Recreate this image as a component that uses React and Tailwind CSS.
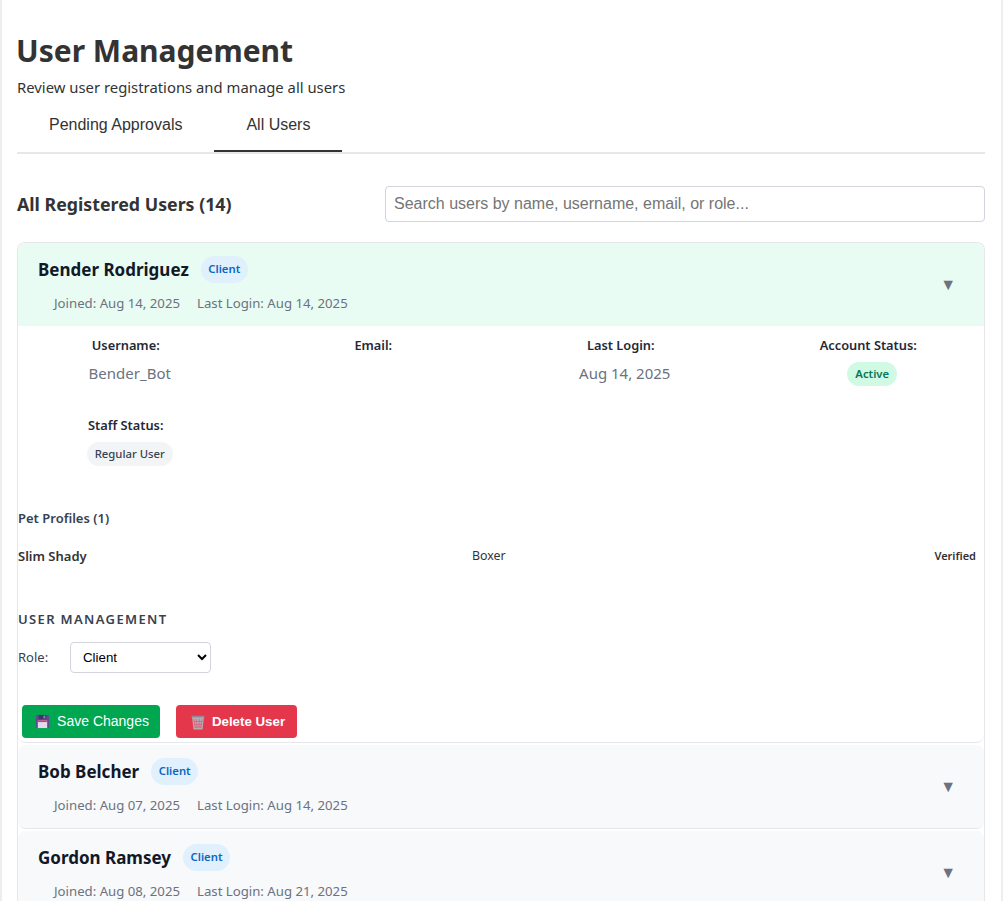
import React from "react";

const SANS = "font-['Noto_Sans','Open_Sans',sans-serif]";
const ARIAL = "font-['Liberation_Sans',Arial,sans-serif]";

const FloppyIcon = () => (
    <svg width="15" height="15" viewBox="0 0 16 16" className="shrink-0">
        <path d="M1 2.5 Q1 1 2.5 1 H14 L15 2 V13.5 Q15 15 13.5 15 H2.5 Q1 15 1 13.5 Z" fill="#5c4b8f" />
        <rect x="4" y="1" width="8" height="4.5" fill="#3f3468" />
        <rect x="9" y="1.8" width="2" height="3" fill="#8d7fbd" />
        <rect x="3" y="7" width="10" height="8" fill="#e3d8ee" />
        <rect x="3" y="7" width="10" height="1.6" fill="#e0365d" />
    </svg>
);

const TrashIcon = () => (
    <svg width="14" height="15" viewBox="0 0 14 15" className="shrink-0">
        <path d="M1 1.5 H13 L11.6 14 Q11.5 14.6 11 14.6 H3 Q2.5 14.6 2.4 14 Z" fill="#b8a9b4" />
        <rect x="0.5" y="0.8" width="13" height="1.6" fill="#8f8a96" />
        <path d="M3 4 L4.4 13 M5.5 4 L6 13 M8.5 4 L8 13 M11 4 L9.6 13 M2.6 6.5 H11.4 M3 9.5 H11 M3.4 12 H10.6" stroke="#d8657c" strokeWidth="0.8" fill="none" />
    </svg>
);

const Caret = () => <span className={`${SANS} mb-[2px] mr-[1px] text-[16px] leading-none text-[#6b7280]`}>▼</span>;

const RoleBadge = () => (
    <span className={`${SANS} ml-3 inline-flex h-[27px] w-[47px] items-center justify-center rounded-full bg-[#e1f0fd] text-[11.3px] font-semibold text-[#0b66c3]`}>
        Client
    </span>
);

const UserHeader = ({ name, joined, login, bg }) => (
    <div className={`flex items-center justify-between pl-[20px] pr-[27px] ${bg}`}>
        <div>
            <div className="flex items-center pt-[13px]">
                <span className="text-[17px] font-bold text-[#111827]">{name}</span>
                <RoleBadge />
            </div>
            <div className="mt-[11px] flex gap-[17px] pb-[14px] pl-4 text-[13.2px] leading-[18px] text-[#6b7280]">
                <span>Joined: {joined}</span>
                <span>Last Login: {login}</span>
            </div>
        </div>
        <Caret />
    </div>
);

const Detail = ({ label, children }) => (
    <div className="flex flex-col items-center">
        <span className="text-[12.8px] font-semibold leading-[18px] text-[#1f2937]">{label}</span>
        {children}
    </div>
);

const Value = ({ children }) => <span className="ml-2 mt-[9px] h-[22px] text-[15px] leading-[21px] text-[#6b7280]">{children}</span>;

const App = () => {
    return (
        <div className={`${SANS} h-[901px] overflow-hidden border-x-2 border-[#eeeeee] bg-white`}>
            <div className="pl-[15px] pr-[16px] pt-[32px]">
                <h1 className="-ml-[1px] text-[30px] font-bold leading-[38px] text-[#333333]">User Management</h1>
                <p className="mt-[7px] text-[14.85px] leading-[20px] text-[#333333]">Review user registrations and manage all users</p>

                <div className={`${ARIAL} mt-[2px] flex border-b-2 border-[#e5e7eb] text-[16px] text-[#333333]`}>
                    <button className="h-[53px] px-8 pb-[2px]">Pending Approvals</button>
                    <button className="h-[53px] border-b-2 border-[#333333] px-8">All Users</button>
                </div>

                <div className="mt-[32px] flex items-center justify-between">
                    <h2 className="text-[17.8px] font-bold text-[#333333]">All Registered Users (14)</h2>
                    <input
                        readOnly
                        placeholder="Search users by name, username, email, or role..."
                        className={`${ARIAL} h-[36px] w-[600px] rounded border border-[#d1d5db] px-2 text-[16px] placeholder:text-[#757575]`}
                    />
                </div>

                <div className="mt-[20px] rounded-t-lg border-x border-t border-[#e5e7eb]">
                    <div className="rounded-lg border-b border-[#e5e7eb] bg-white">
                        <div className="overflow-hidden rounded-t-lg">
                            <UserHeader name="Bender Rodriguez" joined="Aug 14, 2025" login="Aug 14, 2025" bg="bg-[#e9fcf3]" />
                        </div>

                        <div className="pr-[8px]">
                            <div className="grid grid-cols-4 gap-x-8 gap-y-[30px] pt-[10px]">
                                <Detail label="Username:"><Value>Bender_Bot</Value></Detail>
                                <Detail label="Email:"><Value></Value></Detail>
                                <Detail label="Last Login:"><Value>Aug 14, 2025</Value></Detail>
                                <Detail label="Account Status:">
                                    <span className="ml-2 mt-[8px] inline-flex h-6 items-center rounded-full bg-[#d1fae5] px-2 text-[11.3px] font-semibold text-[#047857]">Active</span>
                                </Detail>
                                <Detail label="Staff Status:">
                                    <span className="ml-2 mt-[8px] inline-flex h-6 items-center rounded-full bg-[#f3f4f6] px-2 text-[11.3px] font-medium text-[#374151]">Regular User</span>
                                </Detail>
                            </div>

                            <h3 className="mt-[43px] text-[13px] font-semibold leading-[18px] text-[#374151]">Pet Profiles (1)</h3>
                            <div className="mt-[20px] grid grid-cols-[454px_1fr_auto] items-center text-[13px] leading-[18px] text-[#333333]">
                                <span className="font-semibold">Slim Shady</span>
                                <span className="text-[12.4px]">Boxer</span>
                                <span className="text-[11px] font-semibold">Verified</span>
                            </div>

                            <h3 className="mt-[45px] text-[13px] font-semibold uppercase leading-[18px] tracking-[1.35px] text-[#374151]">User Management</h3>
                            <div className="mt-[14px] flex items-center">
                                <span className="w-[52px] text-[13px] text-[#374151]">Role:</span>
                                <select defaultValue="Client" className={`${ARIAL} h-[31px] w-[141px] rounded border border-[#d1d5db] bg-white px-2 text-[13.3px] text-black`}>
                                    <option>Client</option>
                                </select>
                            </div>

                            <div className="ml-[4px] mt-[32px] flex gap-4 pb-[4px]">
                                <button className={`${ARIAL} flex h-[33px] w-[138px] items-center justify-center gap-[7px] rounded bg-[#00a650] pl-[2px] text-[14px] text-white`}>
                                    <FloppyIcon />
                                    Save Changes
                                </button>
                                <button className={`${ARIAL} flex h-[33px] w-[121px] items-center justify-center gap-[7px] rounded bg-[#e4374b] pl-[3px] pt-[1px] text-[13.3px] font-bold text-white`}>
                                    <TrashIcon />
                                    Delete User
                                </button>
                            </div>
                        </div>
                    </div>

                    <div className="mt-[2px] overflow-hidden rounded-lg border-b border-[#e5e7eb]">
                        <UserHeader name="Bob Belcher" joined="Aug 07, 2025" login="Aug 14, 2025" bg="bg-[#f8f9fb]" />
                    </div>
                    <div className="mt-[2px] overflow-hidden rounded-lg border-b border-[#e5e7eb]">
                        <UserHeader name="Gordon Ramsey" joined="Aug 08, 2025" login="Aug 21, 2025" bg="bg-[#f8f9fb]" />
                    </div>
                </div>
            </div>
        </div>
    );
};

export default App;
